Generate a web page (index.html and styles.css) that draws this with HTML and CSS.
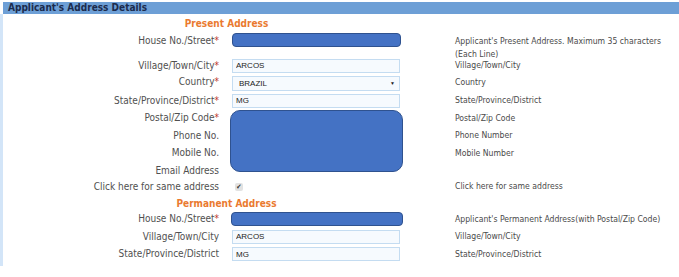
FILE: index.html
```html
<!DOCTYPE html>
<html lang="en">
<head>
  <meta charset="UTF-8" />
  <meta name="viewport" content="width=device-width, initial-scale=1.0"/>
  <title>Applicant's Address Details</title>
  <link rel="stylesheet" href="styles.css">
</head>
<body>
  <div class="panel">
    <div class="panel-head">Applicant's Address Details</div>

    <div class="panel-body">
      <div class="section-title">Present Address</div>

      <div class="row row-tall">
        <label>House No./Street<span class="req">*</span></label>
        <div class="field"><div class="mask mask-line"></div></div>
        <div class="help">Applicant's Present Address. Maximum 35 characters<br>(Each Line)</div>
      </div>

      <div class="row">
        <label>Village/Town/City<span class="req">*</span></label>
        <div class="field"><input class="txt" type="text" value="ARCOS"></div>
        <div class="help">Village/Town/City</div>
      </div>

      <div class="row row-country">
        <label>Country<span class="req">*</span></label>
        <div class="field">
          <div class="select"><span>BRAZIL</span><span class="caret">&#9660;</span></div>
        </div>
        <div class="help">Country</div>
      </div>

      <div class="row">
        <label>State/Province/District<span class="req">*</span></label>
        <div class="field"><input class="txt" type="text" value="MG"></div>
        <div class="help">State/Province/District</div>
      </div>

      <div class="row">
        <label>Postal/Zip Code<span class="req">*</span></label>
        <div class="field field-over"><div class="mask mask-block"></div></div>
        <div class="help">Postal/Zip Code</div>
      </div>

      <div class="row">
        <label>Phone No.</label>
        <div class="field"></div>
        <div class="help">Phone Number</div>
      </div>

      <div class="row">
        <label>Mobile No.</label>
        <div class="field"></div>
        <div class="help">Mobile Number</div>
      </div>

      <div class="row">
        <label>Email Address</label>
        <div class="field"></div>
        <div class="help"></div>
      </div>

      <div class="row row-short">
        <label>Click here for same address</label>
        <div class="field"><span class="check">&#10004;</span></div>
        <div class="help">Click here for same address</div>
      </div>

      <div class="section-title">Permanent Address</div>

      <div class="row">
        <label>House No./Street<span class="req">*</span></label>
        <div class="field"><div class="mask mask-line mask-wide"></div></div>
        <div class="help">Applicant's Permanent Address(with Postal/Zip Code)</div>
      </div>

      <div class="row">
        <label>Village/Town/City</label>
        <div class="field"><input class="txt" type="text" value="ARCOS"></div>
        <div class="help">Village/Town/City</div>
      </div>

      <div class="row">
        <label>State/Province/District</label>
        <div class="field"><input class="txt" type="text" value="MG"></div>
        <div class="help">State/Province/District</div>
      </div>
    </div>
  </div>
</body>
</html>
```

FILE: styles.css
```css
body {
  margin: 0;
  background-color: #ffffff;
  font-family: 'DejaVu Sans Condensed', 'DejaVu Sans', sans-serif;
  color: #505050;
}

.panel {
  padding-top: 2px;
}

.panel-head {
  margin-left: 3px;
  height: 12px;
  line-height: 12px;
  padding-left: 5px;
  background-color: #6d9fd6;
  color: #1c2b4c;
  font-size: 10px;
  font-weight: bold;
}

.panel-body {
  border-left: 3px solid #d3e5f8;
  padding-bottom: 3px;
}

.section-title {
  width: 447px;
  text-align: center;
  height: 17px;
  line-height: 19px;
  color: #ea7a30;
  font-size: 10px;
  font-weight: bold;
}

.section-title:first-child {
  height: 18px;
  line-height: 20px;
}

.row {
  display: grid;
  grid-template-columns: 216px 13px 223px 1fr;
  height: 17.5px;
  align-items: center;
}

.row-tall {
  box-sizing: border-box;
  height: 25px;
  align-items: start;
  padding-top: 2px;
}

.row-country {
  height: 17px;
  padding-bottom: 0.5px;
  align-items: start;
}

.row-short {
  height: 14px;
}

.row label {
  grid-column: 1;
  text-align: right;
  font-size: 10px;
  line-height: 14px;
}

.req {
  color: #c0392b;
}

.field {
  grid-column: 3;
  position: relative;
}

.help {
  grid-column: 4;
  font-size: 8.6px;
  line-height: 13px;
  color: #4a4a4a;
}

.row-tall .help {
  margin-top: 1px;
}

.row-country .help {
  margin-top: 1px;
}

.txt {
  display: block;
  box-sizing: border-box;
  width: 168px;
  height: 14px;
  margin: 0;
  padding: 0 3px;
  border: 1px solid #c4dcf1;
  background-color: #f6fafe;
  font-family: 'Liberation Sans', Arial, sans-serif;
  font-size: 8px;
  color: #222;
  outline: none;
}

.select {
  box-sizing: border-box;
  width: 168px;
  height: 15px;
  margin-top: 1px;
  display: flex;
  align-items: center;
  justify-content: space-between;
  padding: 0 4px 0 6px;
  border: 1px solid #c4dcf1;
  background-color: #f6fafe;
  font-family: 'Liberation Sans', Arial, sans-serif;
  font-size: 8px;
  color: #222;
}

.caret {
  font-size: 5px;
}

.mask {
  box-sizing: border-box;
  background-color: #4472c4;
  border: 1.5px solid #2f528f;
}

.mask-line {
  width: 169px;
  height: 14px;
  border-radius: 4px;
}

.row-tall .mask-line {
  margin-top: -1px;
}

.mask-wide {
  margin-left: -1px;
  width: 172px;
}

.field-over {
  height: 14px;
}

.mask-block {
  position: absolute;
  left: -2px;
  top: -1px;
  width: 173px;
  height: 62px;
  border-radius: 10px;
}

.check {
  display: block;
  margin-left: 3px;
  width: 8px;
  height: 8px;
  line-height: 8px;
  text-align: center;
  border-radius: 2px;
  background-color: #e2e2e2;
  color: #333;
  font-size: 7px;
}
```
